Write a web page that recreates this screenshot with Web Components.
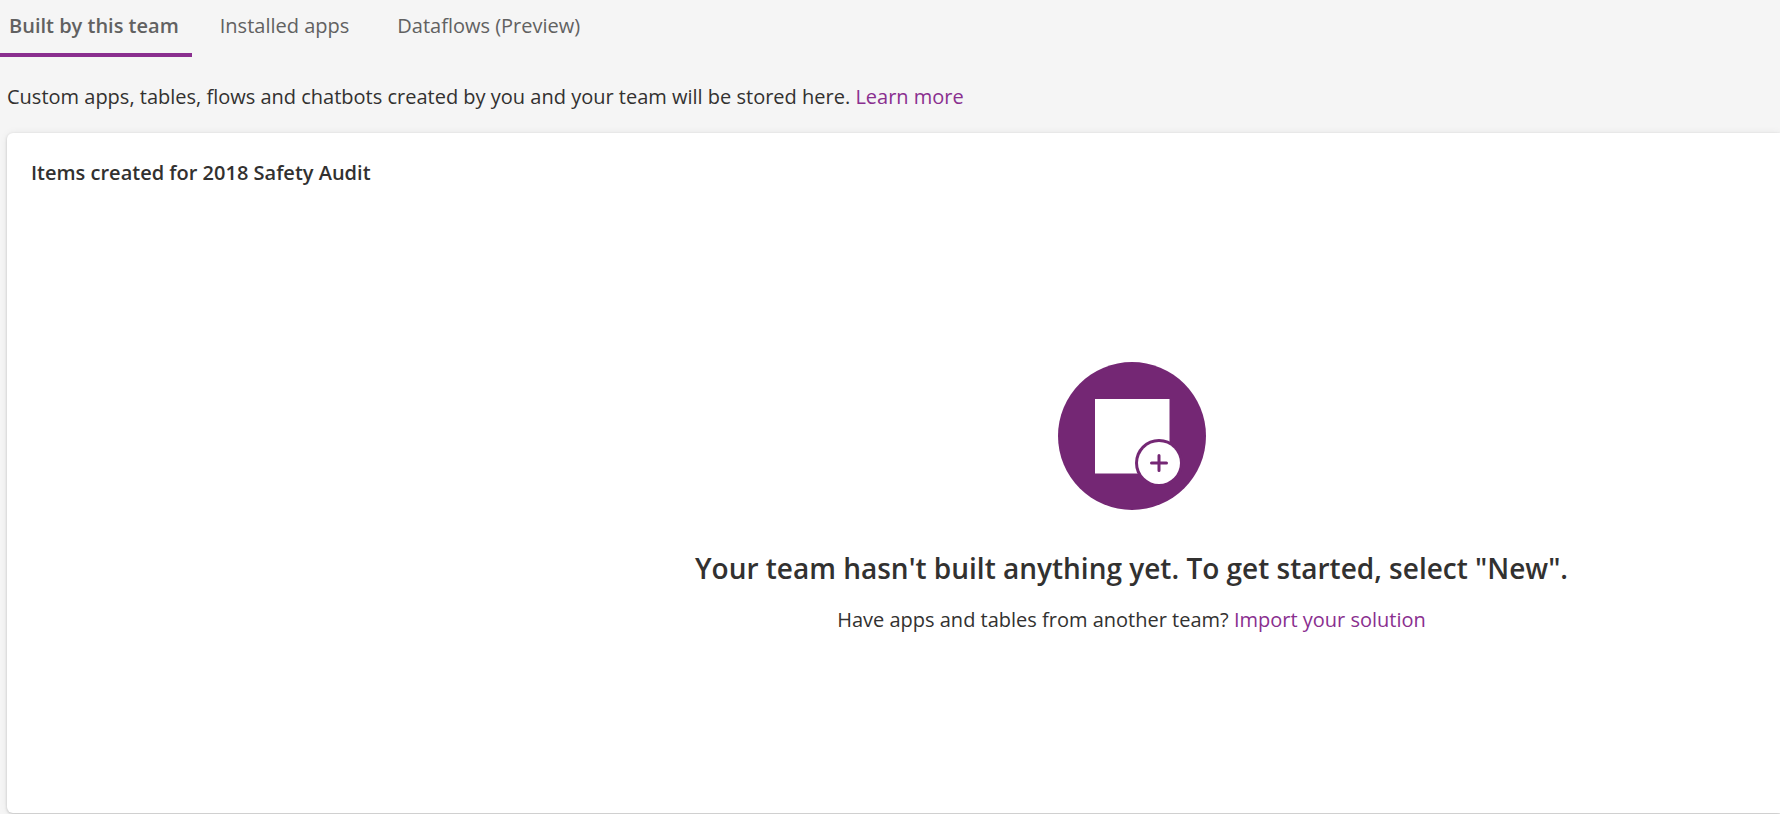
<!DOCTYPE html>
<html lang="en">
<head>
<meta charset="utf-8">
<title>Built by this team</title>
<style>
html, body { height: 100%; margin: 0; }
body {
  --accent: #8a2f8f;
  --muted: #616161;
  --surface: #ffffff;
  background: #f5f5f5;
  color: #323130;
  font: 400 20px/28px "Open Sans", "Noto Sans", sans-serif;
}
</style>
</head>
<body>
<team-page>
  <tab-bar slot="tabs">
    <tab-item selected>Built by this team</tab-item>
    <tab-item>Installed apps</tab-item>
    <tab-item>Dataflows (Preview)</tab-item>
  </tab-bar>
  <page-note slot="note">Custom apps, tables, flows and chatbots created by you and your team will be stored here. <text-link>Learn more</text-link></page-note>
  <item-card>
    <span slot="title">Items created for 2018 Safety Audit</span>
    <empty-state>
      <new-item-icon slot="icon"></new-item-icon>
      <span slot="heading">Your team hasn't built anything yet. To get started, select "New".</span>
      Have apps and tables from another team? <text-link>Import your solution</text-link>
    </empty-state>
  </item-card>
</team-page>
<script>
const define = (name, html, setup) => {
  const template = document.createElement('template');
  template.innerHTML = html;
  customElements.define(name, class extends HTMLElement {
    constructor() {
      super();
      this.attachShadow({ mode: 'open' }).append(template.content.cloneNode(true));
    }
    connectedCallback() { if (setup) setup(this); }
  });
};

define('team-page', `
  <style>
    :host { display: flex; flex-direction: column; min-height: 100vh; box-sizing: border-box; padding-bottom: 1px; }
    main { display: flex; flex-direction: column; flex: 1; margin: 22px 0 0 7px; }
  </style>
  <slot name="tabs"></slot>
  <slot name="note"></slot>
  <main><slot></slot></main>`);

define('tab-bar', `
  <style>
    :host { display: block; }
    div { display: flex; gap: 8px; }
  </style>
  <div role="tablist"><slot></slot></div>`);

define('tab-item', `
  <style>
    :host { display: block; }
    button {
      display: block; margin: 0; padding: 12px 20px 13px; cursor: pointer;
      border: 0; border-bottom: 4px solid transparent; background: none;
      font: inherit; color: var(--muted); white-space: nowrap;
    }
    :host([selected]) button { padding-left: 9px; padding-right: 13px; border-color: var(--accent); font-weight: 600; }
  </style>
  <button type="button" role="tab"><slot></slot></button>`,
  host => host.shadowRoot.querySelector('button').setAttribute('aria-selected', host.hasAttribute('selected')));

define('page-note', `
  <style>
    :host { display: block; margin-top: 26px; padding-left: 7px; }
    p { margin: 0; }
  </style>
  <p><slot></slot></p>`);

define('text-link', `
  <style>
    :host { display: inline; }
    a { color: var(--accent); text-decoration: none; }
    a:hover { text-decoration: underline; }
  </style>
  <a href="#"><slot></slot></a>`);

define('item-card', `
  <style>
    :host {
      display: flex; flex-direction: column; flex: 1;
      background: var(--surface); border-radius: 6px 0 0 6px;
      box-shadow: 0 1px 3px rgba(0, 0, 0, .2), 0 0 8px rgba(0, 0, 0, .06);
    }
    h2 { margin: 0; padding: 26px 24px 0; font: inherit; font-weight: 600; }
  </style>
  <h2><slot name="title"></slot></h2>
  <slot></slot>`);

define('empty-state', `
  <style>
    :host {
      display: flex; flex-direction: column; align-items: center; justify-content: center;
      flex: 1; padding: 0 0 4px 476px; text-align: center;
    }
    h3 { margin: 38px 0 18px; font-size: 28px; line-height: 40px; font-weight: 600; }
    p { margin: 0; }
  </style>
  <slot name="icon"></slot>
  <h3><slot name="heading"></slot></h3>
  <p><slot></slot></p>`);

define('new-item-icon', `
  <style>
    :host { display: block; }
    svg { display: block; width: 148px; height: 148px; }
  </style>
  <svg viewBox="0 0 148 148" aria-hidden="true">
    <circle cx="74" cy="74" r="74" fill="#742774"/>
    <rect x="37" y="37" width="74.500" height="74.500" fill="#fff"/>
    <circle cx="101" cy="101" r="24" fill="#742774"/>
    <circle cx="101" cy="101" r="21" fill="#fff"/>
    <path d="M101 93.500v15M93.500 101h15" fill="none" stroke="#742774" stroke-width="3" stroke-linecap="round"/>
  </svg>`);
</script>
</body>
</html>
